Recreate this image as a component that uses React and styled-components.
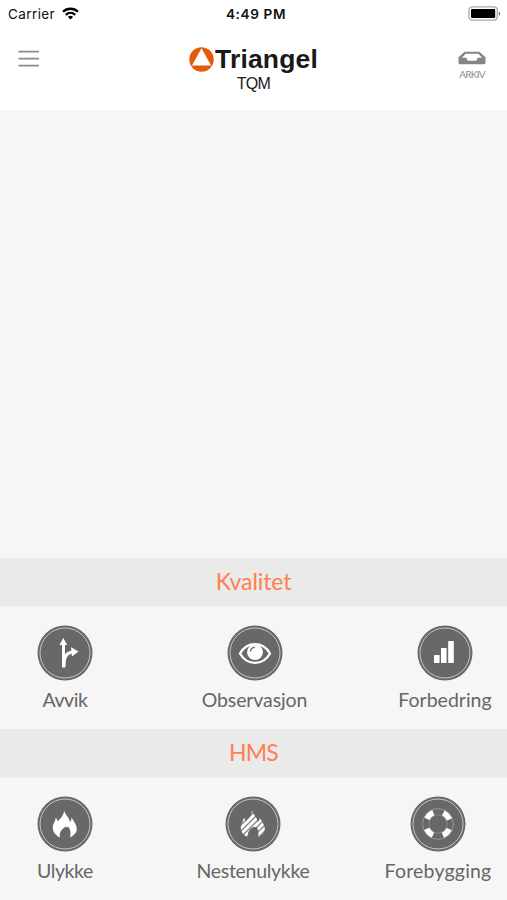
import React from 'react'
import styled, { createGlobalStyle } from 'styled-components'

const GlobalStyle = createGlobalStyle`
  * {
    box-sizing: border-box;
  }
  body {
    margin: 0;
    background: #f6f6f6;
  }
`

const Screen = styled.div`
  width: 100%;
  height: 900px;
  display: flex;
  flex-direction: column;
  overflow: hidden;
  background: #f6f6f6;
  font-family: Lato, 'Open Sans', sans-serif;
`

const StatusBar = styled.div`
  height: 28px;
  padding: 0 6px 0 8px;
  display: grid;
  grid-template-columns: 1fr auto 1fr;
  align-items: center;
  background: #fff;
  color: #111;
  font-family: Inter, sans-serif;
  font-size: 13.5px;
  svg {
    display: block;
  }
`

const Carrier = styled.div`
  display: flex;
  align-items: center;
  gap: 7px;
  letter-spacing: 0.4px;
  svg {
    margin-top: -2px;
  }
`

const Time = styled.div`
  margin-left: 3px;
  font-size: 13.6px;
  font-weight: 600;
  letter-spacing: 0.6px;
`

const Battery = styled.div`
  justify-self: end;
  margin-top: -2px;
`

const Header = styled.header`
  height: 82px;
  padding: 0 21px 0 18px;
  display: grid;
  grid-template-columns: 1fr auto 1fr;
  background: #fff;
  svg {
    display: block;
  }
`

const MenuButton = styled.button`
  width: 22px;
  height: 17px;
  margin-top: 22px;
  padding: 0;
  border: none;
  background: none;
`

const Brand = styled.div`
  padding: 16px 0 0 3px;
  display: flex;
  flex-direction: column;
  align-items: center;
  font-family: 'Liberation Sans', Arial, sans-serif;
  color: #1a1a1a;
`

const Logo = styled.div`
  height: 30px;
  display: flex;
  align-items: center;
  gap: 1px;
  font-size: 26.5px;
  font-weight: 700;
  line-height: 30px;
  letter-spacing: 0.15px;
`

const Product = styled.div`
  font-size: 16px;
  line-height: 18px;
  margin-top: 1px;
  letter-spacing: -0.7px;
`

const ArchiveButton = styled.button`
  justify-self: end;
  align-self: start;
  margin-top: 23px;
  padding: 0;
  border: none;
  background: none;
  display: flex;
  flex-direction: column;
  align-items: center;
  gap: 3px;
  color: #8c8c8c;
  font-family: Lato, sans-serif;
  font-size: 10px;
  line-height: 12px;
  letter-spacing: -0.7px;
`

const Content = styled.main`
  flex: 1;
`

const SectionTitle = styled.h2`
  margin: 0;
  height: 49px;
  border-bottom: 1px solid #f0f0f0;
  background: #eaeaea;
  color: #ff7f50;
  font-size: 23px;
  font-weight: 400;
  line-height: 47px;
  letter-spacing: ${(props) => props.$spacing}px;
  text-align: center;
`

const Row = styled.div`
  height: ${(props) => props.$height}px;
  padding: 18px 15px 0 37px;
  display: grid;
  grid-template-columns: 1fr auto 1fr;
`

const Item = styled.div`
  justify-self: ${(props) => props.$align};
  display: flex;
  flex-direction: column;
  align-items: center;
  width: ${(props) => props.$width}px;
  margin-left: ${(props) => props.$shift || 0}px;
  svg {
    display: block;
  }
`

const Label = styled.span`
  margin-top: 6px;
  color: #666;
  font-size: 19.5px;
  line-height: 26px;
  letter-spacing: ${(props) => props.$spacing}px;
  white-space: nowrap;
`

const FLAME =
  'M27 14C27.5 18 32 21 33 26C34 25 34.5 23.5 34.5 21.5C36 24 39.8 29 39.8 33C39.8 37 36.5 39.5 33 41.5C34 37.5 33.8 34 31.2 30.5C30.6 31.5 30 31.7 29 30.5C27 31.5 21.5 35 23 41.5C19 39.5 15.5 36 15.8 31C16 27.5 18.4 25.5 18.8 21.8C20 23.2 20.3 24.2 20.6 25.2C24.5 22 27 18.5 27 14Z'

const Badge = ({ children }) => (
  <svg width="56" height="56" viewBox="0 0 56 56">
    <circle cx="28" cy="28" r="27.5" fill="#686868" />
    <circle cx="28" cy="28" r="25" fill="none" stroke="#c4c4c4" strokeWidth="1" />
    {children}
  </svg>
)

const icons = {
  fork: (
    <g>
      <path d="M25 42.5V20H22.4L26.3 13L30.2 20H28V42.5Z" fill="#fff" />
      <path d="M27 42C27 33 28.5 28 35 27" fill="none" stroke="#fff" strokeWidth="3" />
      <path d="M34 22.3L41.5 26.5L35 31.4Z" fill="#fff" />
    </g>
  ),
  eye: (
    <g>
      <path
        d="M13 28.5C20 16 36 16 43 28.5C36 41 20 41 13 28.5Z"
        fill="none"
        stroke="#fff"
        strokeWidth="2.3"
        strokeLinejoin="round"
      />
      <circle cx="28" cy="27.2" r="7.9" fill="#fff" />
      <path d="M23.3 26.5C23.8 24 25.3 22.6 27.8 22.2" fill="none" stroke="#686868" strokeWidth="1.3" />
    </g>
  ),
  bars: (
    <g fill="#fff">
      <rect x="17" y="30" width="5.6" height="8" rx="0.6" />
      <rect x="24" y="23" width="5.6" height="15" rx="0.6" />
      <rect x="31.2" y="16" width="5.6" height="22" rx="0.6" />
    </g>
  ),
  flame: <path d={FLAME} fill="#fff" />,
  stripedFlame: (
    <g>
      <clipPath id="flame">
        <path d={FLAME} />
      </clipPath>
      <g clipPath="url(#flame)">
        <rect width="56" height="56" fill="#8a8a8a" />
        <path
          d="M8 34L34 8M8 40L40 8M8 46L46 8M8 52L52 8M12 54L54 12M18 54L54 18M24 54L54 24"
          stroke="#fff"
          strokeWidth="2.7"
        />
      </g>
    </g>
  ),
  buoy: (
    <g fill="none">
      <circle cx="28" cy="28" r="12.2" stroke="#fff" strokeWidth="6.2" strokeDasharray="9 10.16" strokeDashoffset="-5.08" />
      <circle cx="28" cy="28" r="15.4" stroke="#a2a2a2" strokeWidth="0.8" />
      <circle cx="28" cy="28" r="9.2" stroke="#909090" strokeWidth="0.8" />
    </g>
  ),
}

const sections = [
  {
    title: 'Kvalitet',
    spacing: -0.1,
    height: 122,
    items: [
      { label: 'Avvik', icon: 'fork', spacing: -0.4, align: 'start', width: 56 },
      { label: 'Observasjon', icon: 'eye', spacing: -0.1, align: 'center', width: 106, shift: -20 },
      { label: 'Forbedring', icon: 'bars', spacing: 0, align: 'end', width: 94 },
    ],
  },
  {
    title: 'HMS',
    spacing: -0.8,
    height: 122,
    items: [
      { label: 'Ulykke', icon: 'flame', spacing: -0.4, align: 'start', width: 56 },
      { label: 'Nestenulykke', icon: 'stripedFlame', spacing: -0.3, align: 'center', width: 113, shift: -23 },
      { label: 'Forebygging', icon: 'buoy', spacing: 0.2, align: 'end', width: 108 },
    ],
  },
]

const App = () => {
  return (
    <Screen>
      <GlobalStyle />
      <StatusBar>
        <Carrier>
          <span>Carrier</span>
          <svg width="17" height="13" viewBox="0 0 17 13">
            <g fill="none" stroke="#000" strokeWidth="2.3">
              <path d="M1 4.8C5.2 0.7 11.8 0.7 16 4.8" />
              <path d="M3.8 7.8C6.5 5.3 10.5 5.3 13.2 7.8" />
            </g>
            <path d="M5.9 9.9C7.4 8.5 9.6 8.5 11.1 9.9L8.5 12.6Z" fill="#000" />
          </svg>
        </Carrier>
        <Time>4:49 PM</Time>
        <Battery>
          <svg width="33" height="15" viewBox="0 0 33 15">
            <rect x="0.9" y="0.9" width="28.4" height="13.2" rx="3.4" fill="#fff" stroke="#aaa" strokeWidth="1.3" />
            <rect x="3" y="3" width="24.2" height="9" rx="1" fill="#000" />
            <path d="M30.8 5.2C32.6 6 32.6 9 30.8 9.8Z" fill="#777" />
          </svg>
        </Battery>
      </StatusBar>
      <Header>
        <MenuButton aria-label="Meny">
          <svg width="22" height="17" viewBox="0 0 22 17">
            <path d="M0.5 1.6H21M0.5 8.6H21M0.5 15.6H21" stroke="#8a8a8a" strokeWidth="1.7" />
          </svg>
        </MenuButton>
        <Brand>
          <Logo>
            <svg width="25" height="25" viewBox="0 0 25 25">
              <circle cx="12.5" cy="12.5" r="12.2" fill="#e35b0c" />
              <path d="M12.5 1.2L22 18.4H3Z" fill="#fff" />
            </svg>
            <span>Triangel</span>
          </Logo>
          <Product>TQM</Product>
        </Brand>
        <ArchiveButton>
          <svg width="28" height="14" viewBox="0 0 28 14">
            <path
              fillRule="evenodd"
              d="M6.6 0.7H21.4L27.5 6.3V11.8Q27.5 13.2 26 13.2H2Q0.5 13.2 0.5 11.8V6.3ZM7.6 2.8L4 6.8H8.4L9.6 9.8H18.4L19.6 6.8H24L20.4 2.8Z"
              fill="#858585"
            />
          </svg>
          <span>ARKIV</span>
        </ArchiveButton>
      </Header>
      <Content />
      {sections.map((section) => (
        <section key={section.title}>
          <SectionTitle $spacing={section.spacing}>{section.title}</SectionTitle>
          <Row $height={section.height}>
            {section.items.map(({ label, icon, spacing, align, width, shift }) => (
              <Item key={label} $align={align} $width={width} $shift={shift}>
                <Badge>{icons[icon]}</Badge>
                <Label $spacing={spacing}>{label}</Label>
              </Item>
            ))}
          </Row>
        </section>
      ))}
    </Screen>
  )
}

export default App
